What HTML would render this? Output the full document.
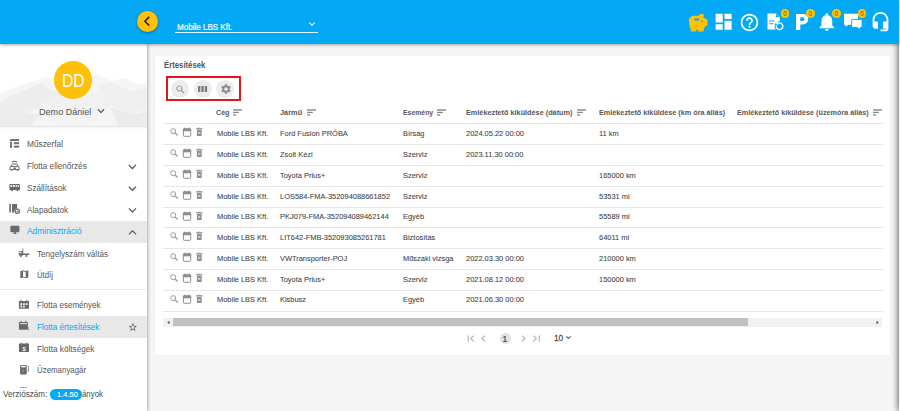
<!DOCTYPE html><html><head><meta charset="utf-8"><style>
*{margin:0;padding:0;box-sizing:border-box}
html,body{width:900px;height:411px;overflow:hidden;background:#f5f5f5;font-family:"Liberation Sans",sans-serif}
.t{position:absolute;white-space:nowrap}
.i{position:absolute;display:block;overflow:visible}
.a{position:absolute}
</style></head><body>
<div class="a" style="left:154.6px;top:55.8px;width:735.3px;height:299.4px;background:#fff;box-shadow:0 0 1px rgba(0,0,0,.06)"></div>
<div class="t" style="left:163.60px;top:60.54px;font-size:8.7px;line-height:8.7px;color:#555;font-weight:bold;transform:scaleX(0.8916);transform-origin:0 0;">Értesítések</div>
<div class="a" style="left:165.8px;top:76.2px;width:75.4px;height:25.1px;border:2.1px solid #e5141c"></div>
<div class="a" style="left:171.20px;top:79.95px;width:17.8px;height:17.8px;border-radius:50%;background:#ececec"></div>
<div class="a" style="left:193.85px;top:79.95px;width:17.8px;height:17.8px;border-radius:50%;background:#ececec"></div>
<div class="a" style="left:216.35px;top:79.95px;width:17.8px;height:17.8px;border-radius:50%;background:#ececec"></div>
<svg class="i" style="left:174.70px;top:83.90px;width:11.10px;height:11.10px;" viewBox="0 0 24 24" preserveAspectRatio="none"><path fill="#8a8a8a" d="M15.5 14h-.79l-.28-.27C15.41 12.59 16 11.11 16 9.5 16 5.910 13.09 3 9.5 3S3 5.91 3 9.5 5.91 16 9.5 16c1.61 0 3.09-.59 4.23-1.57l.27.28v.79l5 4.99L20.49 19l-4.99-5zm-6 0C7.01 14 5 11.99 5 9.5S7.01 5 9.5 5 14 7.01 14 9.5 11.99 14 9.5 14z"/></svg>
<svg class="i" style="left:198px;top:86px;width:9.2px;height:6px" viewBox="0 0 9.2 6"><g fill="#7a7a7a"><rect x="0.1" y="0" width="2.3" height="6"/><rect x="3.45" y="0" width="2.3" height="6"/><rect x="6.8" y="0" width="2.3" height="6"/></g></svg>
<svg class="i" style="left:219.55px;top:82.65px;width:12.00px;height:12.00px;" viewBox="0 0 24 24" preserveAspectRatio="none"><path fill="#8a8a8a" d="M19.14 12.94c.04-.3.06-.61.06-.94 0-.32-.02-.64-.07-.94l2.03-1.58c.18-.14.23-.41.12-.61l-1.92-3.32c-.12-.22-.37-.29-.59-.22l-2.39.96c-.5-.38-1.03-.7-1.62-.94l-.36-2.54c-.04-.24-.24-.41-.48-.41h-3.84c-.24 0-.43.17-.47.41l-.36 2.54c-.59.24-1.13.57-1.62.94l-2.39-.96c-.22-.08-.47 0-.59.22L2.74 8.87c-.12.21-.08.47.12.61l2.03 1.58c-.05.3-.09.63-.09.94s.02.64.07.94l-2.03 1.58c-.18.14-.23.41-.12.61l1.92 3.32c.12.22.37.29.59.22l2.39-.96c.5.38 1.03.7 1.62.94l.36 2.54c.05.24.24.41.48.41h3.84c.24 0 .44-.17.47-.41l.36-2.54c.59-.24 1.13-.56 1.62-.94l2.39.96c.22.08.47 0 .59-.22l1.920-3.32c.12-.22.07-.47-.12-.61l-2.01-1.58zM12 15.6c-1.98 0-3.6-1.62-3.6-3.6s1.62-3.6 3.6-3.6 3.6 1.62 3.6 3.6-1.62 3.6-3.6 3.6z"/></svg>
<div class="t" style="left:216.20px;top:109.18px;font-size:7.7px;line-height:7.7px;color:#585858;font-weight:bold;transform:scaleX(0.9281);transform-origin:0 0;">Cég</div>
<svg class="i" style="left:233.20px;top:109px;width:9.2px;height:7px" viewBox="0 0 9.2 7"><g fill="#858585"><rect x="0" y="0.3" width="9" height="1.4"/><rect x="0" y="2.8" width="5.8" height="1.25"/><rect x="0" y="5.3" width="3.1" height="1.3"/></g></svg>
<div class="t" style="left:280.00px;top:109.18px;font-size:7.7px;line-height:7.7px;color:#585858;font-weight:bold;transform:scaleX(0.9606);transform-origin:0 0;">Jármű</div>
<svg class="i" style="left:306.70px;top:109px;width:9.2px;height:7px" viewBox="0 0 9.2 7"><g fill="#858585"><rect x="0" y="0.3" width="9" height="1.4"/><rect x="0" y="2.8" width="5.8" height="1.25"/><rect x="0" y="5.3" width="3.1" height="1.3"/></g></svg>
<div class="t" style="left:402.70px;top:109.18px;font-size:7.7px;line-height:7.7px;color:#585858;font-weight:bold;transform:scaleX(0.8931);transform-origin:0 0;">Esemény</div>
<svg class="i" style="left:437.10px;top:109px;width:9.2px;height:7px" viewBox="0 0 9.2 7"><g fill="#858585"><rect x="0" y="0.3" width="9" height="1.4"/><rect x="0" y="2.8" width="5.8" height="1.25"/><rect x="0" y="5.3" width="3.1" height="1.3"/></g></svg>
<div class="t" style="left:465.90px;top:109.18px;font-size:7.7px;line-height:7.7px;color:#585858;font-weight:bold;transform:scaleX(0.9472);transform-origin:0 0;">Emlékeztető kiküldése (dátum)</div>
<svg class="i" style="left:576.50px;top:109px;width:9.2px;height:7px" viewBox="0 0 9.2 7"><g fill="#858585"><rect x="0" y="0.3" width="9" height="1.4"/><rect x="0" y="2.8" width="5.8" height="1.25"/><rect x="0" y="5.3" width="3.1" height="1.3"/></g></svg>
<div class="t" style="left:598.70px;top:109.18px;font-size:7.7px;line-height:7.7px;color:#585858;font-weight:bold;transform:scaleX(0.9429);transform-origin:0 0;">Emlékeztető kiküldése (km óra állás)</div>
<div class="t" style="left:737.10px;top:109.18px;font-size:7.7px;line-height:7.7px;color:#585858;font-weight:bold;transform:scaleX(0.9397);transform-origin:0 0;">Emlékeztető kiküldése (üzemóra állás)</div>
<svg class="i" style="left:873.20px;top:109px;width:9.2px;height:7px" viewBox="0 0 9.2 7"><g fill="#858585"><rect x="0" y="0.3" width="9" height="1.4"/><rect x="0" y="2.8" width="5.8" height="1.25"/><rect x="0" y="5.3" width="3.1" height="1.3"/></g></svg>
<div class="a" style="left:163px;top:123.45px;width:719.5px;height:1px;background:#e6e6e6"></div>
<div class="a" style="left:163px;top:144.24px;width:719.5px;height:1px;background:#e6e6e6"></div>
<div class="a" style="left:163px;top:165.03px;width:719.5px;height:1px;background:#e6e6e6"></div>
<div class="a" style="left:163px;top:185.82px;width:719.5px;height:1px;background:#e6e6e6"></div>
<div class="a" style="left:163px;top:206.61px;width:719.5px;height:1px;background:#e6e6e6"></div>
<div class="a" style="left:163px;top:227.40px;width:719.5px;height:1px;background:#e6e6e6"></div>
<div class="a" style="left:163px;top:248.19px;width:719.5px;height:1px;background:#e6e6e6"></div>
<div class="a" style="left:163px;top:268.98px;width:719.5px;height:1px;background:#e6e6e6"></div>
<div class="a" style="left:163px;top:289.77px;width:719.5px;height:1px;background:#e6e6e6"></div>
<div class="a" style="left:163px;top:310.56px;width:719.5px;height:1px;background:#e6e6e6"></div>
<svg class="i" style="left:168px;top:126.40px;width:36px;height:12px" viewBox="168 126 36 12"><g fill="none" stroke="#8e8e8e"><circle cx="173.2" cy="131.1" r="2.5" stroke-width="0.95" stroke="#999"/><path d="M175.1 133 L177.6 135.5" stroke-width="1.3" stroke="#999"/><rect x="183.4" y="128.9" width="7.3" height="7.4" rx=".8" stroke-width="1"/></g><g fill="#8e8e8e"><rect x="182.9" y="128.5" width="8.2" height="2.8" rx=".6"/><rect x="184.3" y="127.5" width="1" height="1.5"/><rect x="188.7" y="127.5" width="1" height="1.5"/><rect x="196.1" y="128.2" width="6.3" height="1.3"/><rect x="198.2" y="127.7" width="2.1" height=".8"/><path d="M196.9 129.9 h4.8 v5.6 q0 .6 -.6 .6 h-3.6 q-.6 0 -.6 -.6z"/></g><path d="M198.3 131.8 L200.3 133.9 M200.3 131.8 L198.3 133.9" stroke="#e8e8e8" stroke-width=".9"/><rect x="184" y="131.7" width="6" height=".5" fill="#d8d8d8"/></svg>
<div class="t" style="left:216.50px;top:130.13px;font-size:8.0px;line-height:8.0px;color:#444;transform:scaleX(0.9300);transform-origin:0 0;-webkit-text-stroke:0.08px #444;">Mobile LBS Kft.</div>
<div class="t" style="left:280.00px;top:130.13px;font-size:8.0px;line-height:8.0px;color:#444;transform:scaleX(0.9300);transform-origin:0 0;-webkit-text-stroke:0.08px #444;">Ford Fusion PRÓBA</div>
<div class="t" style="left:402.70px;top:130.13px;font-size:8.0px;line-height:8.0px;color:#444;transform:scaleX(0.9300);transform-origin:0 0;-webkit-text-stroke:0.08px #444;">Bírság</div>
<div class="t" style="left:465.90px;top:130.13px;font-size:8.0px;line-height:8.0px;color:#444;transform:scaleX(0.9300);transform-origin:0 0;-webkit-text-stroke:0.08px #444;">2024.05.22 00:00</div>
<div class="t" style="left:598.70px;top:130.13px;font-size:8.0px;line-height:8.0px;color:#444;transform:scaleX(0.9300);transform-origin:0 0;-webkit-text-stroke:0.08px #444;">11 km</div>
<svg class="i" style="left:168px;top:147.19px;width:36px;height:12px" viewBox="168 126 36 12"><g fill="none" stroke="#8e8e8e"><circle cx="173.2" cy="131.1" r="2.5" stroke-width="0.95" stroke="#999"/><path d="M175.1 133 L177.6 135.5" stroke-width="1.3" stroke="#999"/><rect x="183.4" y="128.9" width="7.3" height="7.4" rx=".8" stroke-width="1"/></g><g fill="#8e8e8e"><rect x="182.9" y="128.5" width="8.2" height="2.8" rx=".6"/><rect x="184.3" y="127.5" width="1" height="1.5"/><rect x="188.7" y="127.5" width="1" height="1.5"/><rect x="196.1" y="128.2" width="6.3" height="1.3"/><rect x="198.2" y="127.7" width="2.1" height=".8"/><path d="M196.9 129.9 h4.8 v5.6 q0 .6 -.6 .6 h-3.6 q-.6 0 -.6 -.6z"/></g><path d="M198.3 131.8 L200.3 133.9 M200.3 131.8 L198.3 133.9" stroke="#e8e8e8" stroke-width=".9"/><rect x="184" y="131.7" width="6" height=".5" fill="#d8d8d8"/></svg>
<div class="t" style="left:216.50px;top:150.92px;font-size:8.0px;line-height:8.0px;color:#444;transform:scaleX(0.9300);transform-origin:0 0;-webkit-text-stroke:0.08px #444;">Mobile LBS Kft.</div>
<div class="t" style="left:280.00px;top:150.92px;font-size:8.0px;line-height:8.0px;color:#444;transform:scaleX(0.9300);transform-origin:0 0;-webkit-text-stroke:0.08px #444;">Zsolt Kézi</div>
<div class="t" style="left:402.70px;top:150.92px;font-size:8.0px;line-height:8.0px;color:#444;transform:scaleX(0.9300);transform-origin:0 0;-webkit-text-stroke:0.08px #444;">Szerviz</div>
<div class="t" style="left:465.90px;top:150.92px;font-size:8.0px;line-height:8.0px;color:#444;transform:scaleX(0.9300);transform-origin:0 0;-webkit-text-stroke:0.08px #444;">2023.11.30 00:00</div>
<svg class="i" style="left:168px;top:167.98px;width:36px;height:12px" viewBox="168 126 36 12"><g fill="none" stroke="#8e8e8e"><circle cx="173.2" cy="131.1" r="2.5" stroke-width="0.95" stroke="#999"/><path d="M175.1 133 L177.6 135.5" stroke-width="1.3" stroke="#999"/><rect x="183.4" y="128.9" width="7.3" height="7.4" rx=".8" stroke-width="1"/></g><g fill="#8e8e8e"><rect x="182.9" y="128.5" width="8.2" height="2.8" rx=".6"/><rect x="184.3" y="127.5" width="1" height="1.5"/><rect x="188.7" y="127.5" width="1" height="1.5"/><rect x="196.1" y="128.2" width="6.3" height="1.3"/><rect x="198.2" y="127.7" width="2.1" height=".8"/><path d="M196.9 129.9 h4.8 v5.6 q0 .6 -.6 .6 h-3.6 q-.6 0 -.6 -.6z"/></g><path d="M198.3 131.8 L200.3 133.9 M200.3 131.8 L198.3 133.9" stroke="#e8e8e8" stroke-width=".9"/><rect x="184" y="131.7" width="6" height=".5" fill="#d8d8d8"/></svg>
<div class="t" style="left:216.50px;top:171.71px;font-size:8.0px;line-height:8.0px;color:#444;transform:scaleX(0.9300);transform-origin:0 0;-webkit-text-stroke:0.08px #444;">Mobile LBS Kft.</div>
<div class="t" style="left:280.00px;top:171.71px;font-size:8.0px;line-height:8.0px;color:#444;transform:scaleX(0.9300);transform-origin:0 0;-webkit-text-stroke:0.08px #444;">Toyota Prius+</div>
<div class="t" style="left:402.70px;top:171.71px;font-size:8.0px;line-height:8.0px;color:#444;transform:scaleX(0.9300);transform-origin:0 0;-webkit-text-stroke:0.08px #444;">Szerviz</div>
<div class="t" style="left:598.70px;top:171.71px;font-size:8.0px;line-height:8.0px;color:#444;transform:scaleX(0.9300);transform-origin:0 0;-webkit-text-stroke:0.08px #444;">165000 km</div>
<svg class="i" style="left:168px;top:188.77px;width:36px;height:12px" viewBox="168 126 36 12"><g fill="none" stroke="#8e8e8e"><circle cx="173.2" cy="131.1" r="2.5" stroke-width="0.95" stroke="#999"/><path d="M175.1 133 L177.6 135.5" stroke-width="1.3" stroke="#999"/><rect x="183.4" y="128.9" width="7.3" height="7.4" rx=".8" stroke-width="1"/></g><g fill="#8e8e8e"><rect x="182.9" y="128.5" width="8.2" height="2.8" rx=".6"/><rect x="184.3" y="127.5" width="1" height="1.5"/><rect x="188.7" y="127.5" width="1" height="1.5"/><rect x="196.1" y="128.2" width="6.3" height="1.3"/><rect x="198.2" y="127.7" width="2.1" height=".8"/><path d="M196.9 129.9 h4.8 v5.6 q0 .6 -.6 .6 h-3.6 q-.6 0 -.6 -.6z"/></g><path d="M198.3 131.8 L200.3 133.9 M200.3 131.8 L198.3 133.9" stroke="#e8e8e8" stroke-width=".9"/><rect x="184" y="131.7" width="6" height=".5" fill="#d8d8d8"/></svg>
<div class="t" style="left:216.50px;top:192.50px;font-size:8.0px;line-height:8.0px;color:#444;transform:scaleX(0.9300);transform-origin:0 0;-webkit-text-stroke:0.08px #444;">Mobile LBS Kft.</div>
<div class="t" style="left:280.00px;top:192.50px;font-size:8.0px;line-height:8.0px;color:#444;transform:scaleX(0.9300);transform-origin:0 0;-webkit-text-stroke:0.08px #444;">LOS584-FMA-352094088661852</div>
<div class="t" style="left:402.70px;top:192.50px;font-size:8.0px;line-height:8.0px;color:#444;transform:scaleX(0.9300);transform-origin:0 0;-webkit-text-stroke:0.08px #444;">Szerviz</div>
<div class="t" style="left:598.70px;top:192.50px;font-size:8.0px;line-height:8.0px;color:#444;transform:scaleX(0.9300);transform-origin:0 0;-webkit-text-stroke:0.08px #444;">53531 mi</div>
<svg class="i" style="left:168px;top:209.56px;width:36px;height:12px" viewBox="168 126 36 12"><g fill="none" stroke="#8e8e8e"><circle cx="173.2" cy="131.1" r="2.5" stroke-width="0.95" stroke="#999"/><path d="M175.1 133 L177.6 135.5" stroke-width="1.3" stroke="#999"/><rect x="183.4" y="128.9" width="7.3" height="7.4" rx=".8" stroke-width="1"/></g><g fill="#8e8e8e"><rect x="182.9" y="128.5" width="8.2" height="2.8" rx=".6"/><rect x="184.3" y="127.5" width="1" height="1.5"/><rect x="188.7" y="127.5" width="1" height="1.5"/><rect x="196.1" y="128.2" width="6.3" height="1.3"/><rect x="198.2" y="127.7" width="2.1" height=".8"/><path d="M196.9 129.9 h4.8 v5.6 q0 .6 -.6 .6 h-3.6 q-.6 0 -.6 -.6z"/></g><path d="M198.3 131.8 L200.3 133.9 M200.3 131.8 L198.3 133.9" stroke="#e8e8e8" stroke-width=".9"/><rect x="184" y="131.7" width="6" height=".5" fill="#d8d8d8"/></svg>
<div class="t" style="left:216.50px;top:213.29px;font-size:8.0px;line-height:8.0px;color:#444;transform:scaleX(0.9300);transform-origin:0 0;-webkit-text-stroke:0.08px #444;">Mobile LBS Kft.</div>
<div class="t" style="left:280.00px;top:213.29px;font-size:8.0px;line-height:8.0px;color:#444;transform:scaleX(0.9300);transform-origin:0 0;-webkit-text-stroke:0.08px #444;">PKJ079-FMA-352094089462144</div>
<div class="t" style="left:402.70px;top:213.29px;font-size:8.0px;line-height:8.0px;color:#444;transform:scaleX(0.9300);transform-origin:0 0;-webkit-text-stroke:0.08px #444;">Egyéb</div>
<div class="t" style="left:598.70px;top:213.29px;font-size:8.0px;line-height:8.0px;color:#444;transform:scaleX(0.9300);transform-origin:0 0;-webkit-text-stroke:0.08px #444;">55589 mi</div>
<svg class="i" style="left:168px;top:230.35px;width:36px;height:12px" viewBox="168 126 36 12"><g fill="none" stroke="#8e8e8e"><circle cx="173.2" cy="131.1" r="2.5" stroke-width="0.95" stroke="#999"/><path d="M175.1 133 L177.6 135.5" stroke-width="1.3" stroke="#999"/><rect x="183.4" y="128.9" width="7.3" height="7.4" rx=".8" stroke-width="1"/></g><g fill="#8e8e8e"><rect x="182.9" y="128.5" width="8.2" height="2.8" rx=".6"/><rect x="184.3" y="127.5" width="1" height="1.5"/><rect x="188.7" y="127.5" width="1" height="1.5"/><rect x="196.1" y="128.2" width="6.3" height="1.3"/><rect x="198.2" y="127.7" width="2.1" height=".8"/><path d="M196.9 129.9 h4.8 v5.6 q0 .6 -.6 .6 h-3.6 q-.6 0 -.6 -.6z"/></g><path d="M198.3 131.8 L200.3 133.9 M200.3 131.8 L198.3 133.9" stroke="#e8e8e8" stroke-width=".9"/><rect x="184" y="131.7" width="6" height=".5" fill="#d8d8d8"/></svg>
<div class="t" style="left:216.50px;top:234.08px;font-size:8.0px;line-height:8.0px;color:#444;transform:scaleX(0.9300);transform-origin:0 0;-webkit-text-stroke:0.08px #444;">Mobile LBS Kft.</div>
<div class="t" style="left:280.00px;top:234.08px;font-size:8.0px;line-height:8.0px;color:#444;transform:scaleX(0.9300);transform-origin:0 0;-webkit-text-stroke:0.08px #444;">LIT642-FMB-352093085261781</div>
<div class="t" style="left:402.70px;top:234.08px;font-size:8.0px;line-height:8.0px;color:#444;transform:scaleX(0.9300);transform-origin:0 0;-webkit-text-stroke:0.08px #444;">Biztosítás</div>
<div class="t" style="left:598.70px;top:234.08px;font-size:8.0px;line-height:8.0px;color:#444;transform:scaleX(0.9300);transform-origin:0 0;-webkit-text-stroke:0.08px #444;">64011 mi</div>
<svg class="i" style="left:168px;top:251.14px;width:36px;height:12px" viewBox="168 126 36 12"><g fill="none" stroke="#8e8e8e"><circle cx="173.2" cy="131.1" r="2.5" stroke-width="0.95" stroke="#999"/><path d="M175.1 133 L177.6 135.5" stroke-width="1.3" stroke="#999"/><rect x="183.4" y="128.9" width="7.3" height="7.4" rx=".8" stroke-width="1"/></g><g fill="#8e8e8e"><rect x="182.9" y="128.5" width="8.2" height="2.8" rx=".6"/><rect x="184.3" y="127.5" width="1" height="1.5"/><rect x="188.7" y="127.5" width="1" height="1.5"/><rect x="196.1" y="128.2" width="6.3" height="1.3"/><rect x="198.2" y="127.7" width="2.1" height=".8"/><path d="M196.9 129.9 h4.8 v5.6 q0 .6 -.6 .6 h-3.6 q-.6 0 -.6 -.6z"/></g><path d="M198.3 131.8 L200.3 133.9 M200.3 131.8 L198.3 133.9" stroke="#e8e8e8" stroke-width=".9"/><rect x="184" y="131.7" width="6" height=".5" fill="#d8d8d8"/></svg>
<div class="t" style="left:216.50px;top:254.87px;font-size:8.0px;line-height:8.0px;color:#444;transform:scaleX(0.9300);transform-origin:0 0;-webkit-text-stroke:0.08px #444;">Mobile LBS Kft.</div>
<div class="t" style="left:280.00px;top:254.87px;font-size:8.0px;line-height:8.0px;color:#444;transform:scaleX(0.9300);transform-origin:0 0;-webkit-text-stroke:0.08px #444;">VWTransporter-POJ</div>
<div class="t" style="left:402.70px;top:254.87px;font-size:8.0px;line-height:8.0px;color:#444;transform:scaleX(0.9300);transform-origin:0 0;-webkit-text-stroke:0.08px #444;">Műszaki vizsga</div>
<div class="t" style="left:465.90px;top:254.87px;font-size:8.0px;line-height:8.0px;color:#444;transform:scaleX(0.9300);transform-origin:0 0;-webkit-text-stroke:0.08px #444;">2022.03.30 00:00</div>
<div class="t" style="left:598.70px;top:254.87px;font-size:8.0px;line-height:8.0px;color:#444;transform:scaleX(0.9300);transform-origin:0 0;-webkit-text-stroke:0.08px #444;">210000 km</div>
<svg class="i" style="left:168px;top:271.93px;width:36px;height:12px" viewBox="168 126 36 12"><g fill="none" stroke="#8e8e8e"><circle cx="173.2" cy="131.1" r="2.5" stroke-width="0.95" stroke="#999"/><path d="M175.1 133 L177.6 135.5" stroke-width="1.3" stroke="#999"/><rect x="183.4" y="128.9" width="7.3" height="7.4" rx=".8" stroke-width="1"/></g><g fill="#8e8e8e"><rect x="182.9" y="128.5" width="8.2" height="2.8" rx=".6"/><rect x="184.3" y="127.5" width="1" height="1.5"/><rect x="188.7" y="127.5" width="1" height="1.5"/><rect x="196.1" y="128.2" width="6.3" height="1.3"/><rect x="198.2" y="127.7" width="2.1" height=".8"/><path d="M196.9 129.9 h4.8 v5.6 q0 .6 -.6 .6 h-3.6 q-.6 0 -.6 -.6z"/></g><path d="M198.3 131.8 L200.3 133.9 M200.3 131.8 L198.3 133.9" stroke="#e8e8e8" stroke-width=".9"/><rect x="184" y="131.7" width="6" height=".5" fill="#d8d8d8"/></svg>
<div class="t" style="left:216.50px;top:275.66px;font-size:8.0px;line-height:8.0px;color:#444;transform:scaleX(0.9300);transform-origin:0 0;-webkit-text-stroke:0.08px #444;">Mobile LBS Kft.</div>
<div class="t" style="left:280.00px;top:275.66px;font-size:8.0px;line-height:8.0px;color:#444;transform:scaleX(0.9300);transform-origin:0 0;-webkit-text-stroke:0.08px #444;">Toyota Prius+</div>
<div class="t" style="left:402.70px;top:275.66px;font-size:8.0px;line-height:8.0px;color:#444;transform:scaleX(0.9300);transform-origin:0 0;-webkit-text-stroke:0.08px #444;">Szerviz</div>
<div class="t" style="left:465.90px;top:275.66px;font-size:8.0px;line-height:8.0px;color:#444;transform:scaleX(0.9300);transform-origin:0 0;-webkit-text-stroke:0.08px #444;">2021.08.12 00:00</div>
<div class="t" style="left:598.70px;top:275.66px;font-size:8.0px;line-height:8.0px;color:#444;transform:scaleX(0.9300);transform-origin:0 0;-webkit-text-stroke:0.08px #444;">150000 km</div>
<svg class="i" style="left:168px;top:292.72px;width:36px;height:12px" viewBox="168 126 36 12"><g fill="none" stroke="#8e8e8e"><circle cx="173.2" cy="131.1" r="2.5" stroke-width="0.95" stroke="#999"/><path d="M175.1 133 L177.6 135.5" stroke-width="1.3" stroke="#999"/><rect x="183.4" y="128.9" width="7.3" height="7.4" rx=".8" stroke-width="1"/></g><g fill="#8e8e8e"><rect x="182.9" y="128.5" width="8.2" height="2.8" rx=".6"/><rect x="184.3" y="127.5" width="1" height="1.5"/><rect x="188.7" y="127.5" width="1" height="1.5"/><rect x="196.1" y="128.2" width="6.3" height="1.3"/><rect x="198.2" y="127.7" width="2.1" height=".8"/><path d="M196.9 129.9 h4.8 v5.6 q0 .6 -.6 .6 h-3.6 q-.6 0 -.6 -.6z"/></g><path d="M198.3 131.8 L200.3 133.9 M200.3 131.8 L198.3 133.9" stroke="#e8e8e8" stroke-width=".9"/><rect x="184" y="131.7" width="6" height=".5" fill="#d8d8d8"/></svg>
<div class="t" style="left:216.50px;top:296.45px;font-size:8.0px;line-height:8.0px;color:#444;transform:scaleX(0.9300);transform-origin:0 0;-webkit-text-stroke:0.08px #444;">Mobile LBS Kft.</div>
<div class="t" style="left:280.00px;top:296.45px;font-size:8.0px;line-height:8.0px;color:#444;transform:scaleX(0.9300);transform-origin:0 0;-webkit-text-stroke:0.08px #444;">Kisbusz</div>
<div class="t" style="left:402.70px;top:296.45px;font-size:8.0px;line-height:8.0px;color:#444;transform:scaleX(0.9300);transform-origin:0 0;-webkit-text-stroke:0.08px #444;">Egyéb</div>
<div class="t" style="left:465.90px;top:296.45px;font-size:8.0px;line-height:8.0px;color:#444;transform:scaleX(0.9300);transform-origin:0 0;-webkit-text-stroke:0.08px #444;">2021.06.30 00:00</div>
<div class="a" style="left:163.2px;top:317.5px;width:719px;height:9px;background:#f1f1f1"></div>
<div class="a" style="left:172.9px;top:317.8px;width:575px;height:8.6px;background:#c1c1c1"></div>
<svg class="i" style="left:165.5px;top:319.5px;width:5px;height:5px" viewBox="0 0 10 10"><path d="M7 1.5v7L2.5 5z" fill="#505050"/></svg>
<svg class="i" style="left:874.8px;top:319.7px;width:5px;height:5px" viewBox="0 0 10 10"><path d="M3 1.5v7L7.5 5z" fill="#505050"/></svg>
<svg class="i" style="left:460px;top:330px;width:120px;height:16px" viewBox="460 330 120 16"><g fill="none" stroke="#bdbdbd" stroke-width="1.3">
<path d="M473.6 335.8 L470.6 338.6 L473.6 341.4"/><path d="M485 335.8 L481.9 338.6 L485 341.4"/><path d="M522 335.8 L525.1 338.6 L522 341.4"/><path d="M533.3 335.8 L536.3 338.6 L533.3 341.4"/></g>
<g fill="#bdbdbd"><rect x="467.6" y="335.5" width="1.3" height="6.2"/><rect x="538.7" y="335.5" width="1.3" height="6.2"/></g>
<path d="M566.4 336.4 L568.5 338.5 L570.6 336.4" fill="none" stroke="#666" stroke-width="1.2"/></svg>
<div class="a" style="left:500px;top:333.1px;width:11px;height:11px;border-radius:50%;background:#e2e2e2"></div>
<div class="t" style="left:502.40px;top:334.92px;font-size:8.6px;line-height:8.6px;color:#444;-webkit-text-stroke:0.2px #444;">1</div>
<div class="t" style="left:553.80px;top:334.05px;font-size:8.8px;line-height:8.8px;color:#555;transform:scaleX(0.9399);transform-origin:0 0;-webkit-text-stroke:0.3px #555;">10</div>
<div class="a" style="left:899px;top:0;width:20px;height:411px;background:#f8f8f8;box-shadow:-1px 0 6px rgba(0,0,0,.6)"></div>
<div class="a" style="left:0;top:44px;width:146.8px;height:367px;background:#fff;box-shadow:1px 0 3px rgba(0,0,0,.3)"></div>
<svg class="i" style="left:0;top:44px;width:146.8px;height:82px" viewBox="0 0 146 82" preserveAspectRatio="none">
<rect width="146" height="82" fill="#fff"/>
<path d="M0 50 L12 44 L22 41 L34 37 L46 33 L56 38 L66 31 L80 35 L96 31 L110 37 L124 34 L136 40 L146 39 L146 82 L0 82z" fill="#f5f5f6"/>
<path d="M0 58 L14 50 L28 45 L40 39 L50 45 L60 51 L48 61 L30 67 L10 71 L0 73z" fill="#ededee"/>
<path d="M96 41 L112 39 L130 47 L146 45 L146 65 L128 71 L110 61z" fill="#efeff0"/>
<path d="M40 61 L62 49 L84 53 L100 47 L112 59 L96 73 L70 77 L50 75z" fill="#f1f1f3"/>
<path d="M0 73 L20 67 L40 71 L30 82 L0 82z" fill="#ececee"/>
<path d="M110 63 L130 71 L146 67 L146 82 L118 82z" fill="#ebebed"/>
<path d="M50 75 L72 71 L96 75 L86 82 L58 82z" fill="#f3f4f6"/>
</svg>
<div class="a" style="left:0;top:125.8px;width:146.8px;height:1px;background:#e6e6e6;box-shadow:0 1px 2px rgba(0,0,0,.08)"></div>
<div class="a" style="left:54.2px;top:61px;width:37.7px;height:37.7px;border-radius:50%;background:#ffc107"></div>
<div class="t" style="left:61.90px;top:71.79px;font-size:18.2px;line-height:18.2px;color:#fff;transform:scaleX(0.8597);transform-origin:0 0;">DD</div>
<div class="t" style="left:38.80px;top:107.00px;font-size:9.8px;line-height:9.8px;color:#555;transform:scaleX(0.9250);transform-origin:0 0;">Demo Dániel</div>
<svg class="i" style="left:93.50px;top:104.06px;width:14.00px;height:14.00px;" viewBox="0 0 24 24" preserveAspectRatio="none"><path fill="#444" d="M16.59 8.59L12 13.17 7.41 8.59 6 10l6 6 6-6z"/></svg>
<div class="a" style="left:0;top:220.8px;width:146.8px;height:21.9px;background:#e8e8e8"></div>
<div class="a" style="left:0;top:316.0px;width:146.8px;height:21.7px;background:#e8e8e8"></div>
<div class="a" style="left:0;top:289.4px;width:146.8px;height:1px;background:#ececec"></div>
<div class="t" style="left:26.90px;top:140.31px;font-size:9.2px;line-height:9.2px;color:#555;transform:scaleX(0.9053);transform-origin:0 0;">Műszerfal</div>
<div class="t" style="left:26.90px;top:162.11px;font-size:9.2px;line-height:9.2px;color:#555;transform:scaleX(0.8859);transform-origin:0 0;">Flotta ellenőrzés</div>
<div class="t" style="left:26.90px;top:183.51px;font-size:9.2px;line-height:9.2px;color:#555;transform:scaleX(0.8879);transform-origin:0 0;">Szállítások</div>
<div class="t" style="left:27.00px;top:205.81px;font-size:9.2px;line-height:9.2px;color:#555;transform:scaleX(0.8949);transform-origin:0 0;">Alapadatok</div>
<div class="t" style="left:27.00px;top:227.21px;font-size:9.2px;line-height:9.2px;color:#03a9f4;transform:scaleX(0.9144);transform-origin:0 0;">Adminisztráció</div>
<div class="t" style="left:36.90px;top:249.51px;font-size:9.2px;line-height:9.2px;color:#555;transform:scaleX(0.8856);transform-origin:0 0;">Tengelyszám váltás</div>
<div class="t" style="left:36.90px;top:270.61px;font-size:9.2px;line-height:9.2px;color:#555;transform:scaleX(0.8405);transform-origin:0 0;">Útdíj</div>
<div class="t" style="left:36.90px;top:301.31px;font-size:9.2px;line-height:9.2px;color:#555;transform:scaleX(0.8773);transform-origin:0 0;">Flotta események</div>
<div class="t" style="left:36.90px;top:322.81px;font-size:9.2px;line-height:9.2px;color:#03a9f4;transform:scaleX(0.8843);transform-origin:0 0;">Flotta értesítések</div>
<div class="t" style="left:36.90px;top:344.61px;font-size:9.2px;line-height:9.2px;color:#555;transform:scaleX(0.8924);transform-origin:0 0;">Flotta költségek</div>
<div class="t" style="left:36.90px;top:366.11px;font-size:9.2px;line-height:9.2px;color:#555;transform:scaleX(0.8591);transform-origin:0 0;">Üzemanyagár</div>
<svg class="i" style="left:124px;top:160px;width:16px;height:80px" viewBox="124 160 16 80"><g fill="none" stroke="#5a5a5a" stroke-width="1.25"><path d="M128.8 164.9 L132.4 168.5 L136 164.9"/><path d="M128.8 186.7 L132.4 190.3 L136 186.7"/><path d="M128.8 208.4 L132.4 212 L136 208.4"/><path d="M128.9 234.4 L132.5 230.8 L136.1 234.4"/></g></svg>
<svg class="i" style="left:128.40px;top:321.90px;width:9.72px;height:10.23px;" viewBox="0 0 24 24" preserveAspectRatio="none"><path fill="#555" d="M22 9.24l-7.19-.62L12 2 9.19 8.63 2 9.24l5.46 4.73L5.82 21 12 17.27 18.18 21l-1.63-7.03L22 9.24zM12 15.4l-3.76 2.27 1-4.28-3.32-2.88 4.38-.38L12 6.1l1.71 4.04 4.38.38-3.32 2.88 1 4.28L12 15.4z"/></svg>
<svg class="i" style="left:8px;top:137px;width:13px;height:12px" viewBox="8 137 13 12"><g fill="#6a6a6a"><rect x="10.1" y="139.1" width="9" height="1.9"/><rect x="10.1" y="141.8" width="1.8" height="6.2"/><rect x="13.8" y="142.2" width="5.3" height="1.7"/><rect x="13.8" y="145.7" width="5.3" height="1.9"/></g><rect x="13.8" y="144.3" width="5.3" height="1" fill="#ccc"/></svg>
<svg class="i" style="left:8px;top:158px;width:14px;height:14px" viewBox="8 158 14 14"><path d="M12.2 162.1 Q14.6 160.3 17.1 162.1" stroke="#6a6a6a" stroke-width="1.1" fill="none"/><path d="M12.3 164 h4.6 l1.3 2.8 h-7.2z" stroke="#6a6a6a" stroke-width="1" fill="none"/><path d="M10.6 166.6 h8 q.6 0 .6 .6 v2.4 h-9.2 v-2.4 q0 -.6 .6 -.6z" stroke="#6a6a6a" stroke-width="1" fill="#fff"/><rect x="10.5" y="169.2" width="1.9" height="1.4" fill="#6a6a6a"/><rect x="16.8" y="169.2" width="1.9" height="1.4" fill="#6a6a6a"/><rect x="13.3" y="167.6" width="2.6" height="1.4" fill="#6a6a6a"/></svg>
<svg class="i" style="left:8px;top:182px;width:14px;height:11px" viewBox="8 182 14 11"><path d="M10 184.1 h9.4 q.6 0 .6 .6 v5.3 h-10.6 v-5.3 q0 -.6 .6 -.6z" fill="#6a6a6a"/><g fill="#fff"><rect x="10.4" y="185.1" width="1.8" height="1.7"/><rect x="12.9" y="185.1" width="2.3" height="1.7"/><rect x="15.9" y="185.1" width="1.3" height="1.7"/><rect x="17.9" y="185.1" width="1.3" height="1.7"/></g><circle cx="12" cy="190.2" r="1" fill="#6a6a6a"/><circle cx="17.6" cy="190.2" r="1" fill="#6a6a6a"/></svg>
<svg class="i" style="left:8px;top:202px;width:14px;height:13px" viewBox="8 202 14 13"><rect x="9.3" y="203.9" width="1.6" height="8.6" fill="#6a6a6a"/><path d="M12 203.9 h5.1 v4.6 a3.2 3.2 0 0 0 -3 4 h-2.1z" fill="#6a6a6a"/><circle cx="17.3" cy="211.3" r="2.1" stroke="#6a6a6a" stroke-width="1.3" fill="none"/><circle cx="17.3" cy="211.3" r=".7" fill="#6a6a6a"/></svg>
<svg class="i" style="left:17px;top:247px;width:14px;height:11px" viewBox="17 247 14 11"><rect x="22.6" y="248.2" width=".7" height="3" fill="#6a6a6a"/><path d="M18.8 251 h4.4 v4.5 h-4.4z" fill="#6a6a6a"/><rect x="19.4" y="251.6" width="2" height="1.5" fill="#fff"/><rect x="23" y="253.5" width="6.3" height="1.5" fill="#6a6a6a"/><circle cx="20.8" cy="255.9" r="1" fill="#6a6a6a"/><circle cx="26.5" cy="255.9" r="1" fill="#6a6a6a"/></svg>
<svg class="i" style="left:18.77px;top:269.27px;width:10.70px;height:10.70px;" viewBox="0 0 24 24" preserveAspectRatio="none"><path fill="#6a6a6a" d="M20.5 3l-.16.03L15 5.1 9 3 3.36 4.9c-.21.07-.36.25-.36.48V20.5c0 .28.22.5.5.5l.16-.03L9 18.9l6 2.1 5.64-1.9c.21-.07.36-.25.36-.48V3.5c0-.28-.22-.5-.5-.5zM15 19l-6-2.11V5l6 2.11V19z"/></svg>
<svg class="i" style="left:9.99px;top:225.48px;width:9.80px;height:9.80px;" viewBox="0 0 24 24" preserveAspectRatio="none"><path fill="#6a6a6a" d="M21 2H3c-1.1 0-2 .9-2 2v12c0 1.1.9 2 2 2h7v2H8v2h8v-2h-2v-2h7c1.1 0 2-.9 2-2V4c0-1.1-.9-2-2-2z"/></svg>
<svg class="i" style="left:17px;top:298px;width:14px;height:12px" viewBox="17 298 14 12"><rect x="18.9" y="301" width="10.1" height="7.7" rx=".6" fill="#6a6a6a"/><rect x="20.6" y="299.7" width=".9" height="1.8" fill="#6a6a6a"/><rect x="26.4" y="299.7" width=".9" height="1.8" fill="#6a6a6a"/><g fill="#fff"><rect x="20.4" y="303.2" width="1.7" height="1.8"/><rect x="23.1" y="303.2" width="1.7" height="1.8"/><rect x="25.8" y="303.2" width="1.7" height="1.8"/><rect x="20.4" y="305.7" width="1.7" height="1.7"/><rect x="23.1" y="305.7" width="1.7" height="1.7"/></g></svg>
<svg class="i" style="left:17px;top:319px;width:14px;height:13px" viewBox="17 319 14 13"><rect x="18.9" y="322" width="9" height="7.7" rx=".6" fill="#6a6a6a"/><rect x="20.6" y="320.7" width=".9" height="1.8" fill="#6a6a6a"/><rect x="25.3" y="320.7" width=".9" height="1.8" fill="#6a6a6a"/><rect x="19.8" y="323.2" width="7.2" height=".9" fill="#f4f4f4"/><rect x="27.9" y="326.8" width=".9" height="3.6" fill="#999"/></svg>
<svg class="i" style="left:17px;top:341px;width:14px;height:12px" viewBox="17 341 14 12"><rect x="18.9" y="343.6" width="10.1" height="8.3" rx=".6" fill="#6a6a6a"/><rect x="20.8" y="342.6" width=".9" height="1.6" fill="#6a6a6a"/><rect x="26.3" y="342.6" width=".9" height="1.6" fill="#6a6a6a"/><text x="22.6" y="350.6" font-size="5.6" font-family="Liberation Sans" font-weight="bold" fill="#fff">$</text></svg>
<svg class="i" style="left:18px;top:363px;width:13px;height:13px" viewBox="18 363 13 13"><rect x="20.1" y="364.9" width="6.6" height="9.6" rx=".8" fill="#6a6a6a"/><rect x="21.1" y="365.9" width="4.5" height="1.4" fill="#fff"/><path d="M23.8 368.5 l-1.3 3.6 h.7z" fill="#ddd"/><path d="M27.3 365.6 l1.1 1.3 v4.2 l-1 1" stroke="#777" stroke-width=".9" fill="none"/></svg>
<div class="a" style="left:19.7px;top:387px;width:7px;height:1.2px;background:#aaa"></div>
<div class="t" style="left:3.00px;top:389.51px;font-size:9.2px;line-height:9.2px;color:#4a4a4a;transform:scaleX(0.8881);transform-origin:0 0;">Verziószám:</div>
<div class="t" style="left:82.00px;top:389.51px;font-size:9.2px;line-height:9.2px;color:#4a4a4a;transform:scaleX(0.8554);transform-origin:0 0;">ányok</div>
<div class="a" style="left:50.3px;top:389.2px;width:32.2px;height:10.8px;border-radius:5.4px;background:#03a9f4"></div>
<div class="t" style="left:56.60px;top:390.90px;font-size:7.8px;line-height:7.8px;color:#fff;transform:scaleX(0.9591);transform-origin:0 0;-webkit-text-stroke:0.15px #fff;">1.4.50</div>
<div class="a" style="left:0;top:0;width:899px;height:44px;background:#03a9f4;box-shadow:0 1px 3px rgba(0,0,0,.35)"></div>
<div class="a" style="left:137.1px;top:10.6px;width:21.2px;height:21.2px;border-radius:50%;background:#ffc107;box-shadow:0 1px 3px rgba(0,0,0,.35)"></div>
<svg class="i" style="left:140px;top:14px;width:14px;height:14px" viewBox="140 14 14 14"><path d="M149.2 16.9 L144.9 21.2 L149.2 25.5" fill="none" stroke="#222" stroke-width="1.6"/></svg>
<div class="t" style="left:176.80px;top:22.78px;font-size:9.0px;line-height:9.0px;color:#fff;transform:scaleX(0.8931);transform-origin:0 0;-webkit-text-stroke:0.2px #fff;">Mobile LBS Kft.</div>
<div class="a" style="left:175.4px;top:32.2px;width:142.7px;height:1px;background:rgba(255,255,255,.85)"></div>
<svg class="i" style="left:305.80px;top:17.60px;width:12.00px;height:12.00px;" viewBox="0 0 24 24" preserveAspectRatio="none"><path fill="#fff" d="M16.59 8.59L12 13.17 7.41 8.59 6 10l6 6 6-6z"/></svg>
<svg class="i" style="left:686.50px;top:11.50px;width:22.40px;height:22.40px;" viewBox="0 0 24 24" preserveAspectRatio="none"><path fill="#ffc107" d="M19.83 7.5l-2.27-2.27c.07-.42.18-.81.32-1.15.08-.18.12-.37.12-.58 0-.83-.67-1.5-1.5-1.5-1.64 0-3.09.79-4 2h-5C4.46 4 2 6.46 2 9.5S4.5 21 4.5 21H10v-2h2v2h5.5l1.68-5.59 2.82-.94V7.5h-2.17zM13 9H8V7h5v2zm3 2c-.55 0-1-.45-1-1s.45-1 1-1 1 .45 1 1-.45 1-1 1z"/></svg>
<svg class="i" style="left:713.30px;top:11.10px;width:21.30px;height:21.30px;" viewBox="0 0 24 24" preserveAspectRatio="none"><path fill="#fff" d="M3 13h8V3H3v10zm0 8h8v-6H3v6zm10 0h8V11h-8v10zm0-18v6h8V3h-8z"/></svg>
<svg class="i" style="left:739.45px;top:11.65px;width:21.00px;height:21.00px;" viewBox="0 0 24 24" preserveAspectRatio="none"><path fill="#fff" d="M11 18h2v-2h-2v2zm1-16C6.48 2 2 6.480 2 12s4.48 10 10 10 10-4.48 10-10S17.52 2 12 2zm0 18c-4.41 0-8-3.59-8-8s3.59-8 8-8 8 3.59 8 8-3.59 8-8 8zm0-14c-2.21 0-4 1.79-4 4h2c0-1.1.9-2 2-2s2 .9 2 2c0 2-3 1.75-3 5h2c0-2.25 3-2.5 3-5 0-2.21-1.79-4-4-4z"/></svg>
<svg class="i" style="left:766px;top:13px;width:20px;height:18px" viewBox="0 0 20 18">
<path fill="#fff" fill-rule="evenodd" d="M1.5 0.6h8.5l3.8 3.6v12.3h-12.3z M10 0.9v3.3h3.3z M3 7.5h5.5v1.1h-5.5z M3 10.2h4.5v1.1h-4.5z"/>
<circle cx="13.5" cy="13.3" r="5" fill="#03a9f4"/>
<path fill="none" stroke="#fff" stroke-width="1.4" d="M10.4 12.3 A3.3 3.3 0 1 0 12.2 10.3"/>
<path fill="#fff" d="M9 9.8 l3.5 -1 l-0.3 3.4z"/>
</svg>
<svg class="i" style="left:796px;top:14.2px;width:12.2px;height:16px" viewBox="0 0 12.2 16">
<path fill="#fff" fill-rule="evenodd" d="M0 0h6.6c3.2 0 5.6 2.1 5.6 5.2s-2.4 5.2-5.6 5.2H4.3V16H0z M4.3 3.3v3.8h2.2c1.2 0 2-.8 2-1.9s-.8-1.9-2-1.9z"/>
</svg>
<svg class="i" style="left:816.30px;top:11.35px;width:21.70px;height:21.70px;" viewBox="0 0 24 24" preserveAspectRatio="none"><path fill="#fff" d="M12 22c1.1 0 2-.9 2-2h-4c0 1.1.89 2 2 2zm6-6v-5c0-3.07-1.64-5.64-4.5-6.32V4c0-.83-.67-1.5-1.5-1.5s-1.5.67-1.5 1.5v.68C7.63 5.36 6 7.92 6 11v5l-2 2v1h16v-1l-2-2z"/></svg>
<svg class="i" style="left:843px;top:13px;width:20px;height:18px" viewBox="0 0 20 18">
<path fill="#fff" d="M1 0.8h14v10.9H5.5l-3 2.4v-2.4H1z"/>
<path fill="#fff" stroke="#03a9f4" stroke-width="0.9" d="M8.7 6.4h10.4v8h-2.2v2.5l-2.6-2.5H8.7z"/>
</svg>
<svg class="i" style="left:869.50px;top:11.40px;width:21.00px;height:21.20px;" viewBox="0 0 24 24" preserveAspectRatio="none"><path fill="#fff" d="M12 1c-4.97 0-9 4.03-9 9v7c0 1.66 1.34 3 3 3h3v-8H5v-2c0-3.87 3.13-7 7-7s7 3.13 7 7v2h-4v8h4v1h-7v2h6c1.66 0 3-1.34 3-3V10c0-4.97-4.03-9-9-9z"/></svg>
<div class="a" style="left:780.70px;top:9.35px;width:8.6px;height:8.6px;border-radius:50%;background:#ffc107"></div>
<div class="t" style="left:783.25px;top:11.17px;font-size:6.3px;line-height:6.3px;color:#6b5000;">0</div>
<div class="a" style="left:806.20px;top:9.35px;width:8.6px;height:8.6px;border-radius:50%;background:#ffc107"></div>
<div class="t" style="left:808.75px;top:11.17px;font-size:6.3px;line-height:6.3px;color:#6b5000;">0</div>
<div class="a" style="left:832.00px;top:9.35px;width:8.6px;height:8.6px;border-radius:50%;background:#ffc107"></div>
<div class="t" style="left:834.55px;top:11.17px;font-size:6.3px;line-height:6.3px;color:#6b5000;">0</div>
<div class="a" style="left:857.80px;top:9.35px;width:8.6px;height:8.6px;border-radius:50%;background:#ffc107"></div>
<div class="t" style="left:860.35px;top:11.17px;font-size:6.3px;line-height:6.3px;color:#6b5000;">0</div>
</body></html>
